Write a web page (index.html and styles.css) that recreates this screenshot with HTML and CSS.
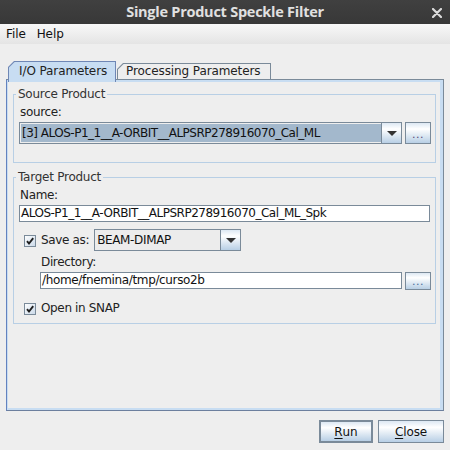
FILE: index.html
```html
<!DOCTYPE html>
<html>
<head>
<meta charset="utf-8">
<link rel="stylesheet" href="styles.css">
</head>
<body>
<div class="window">
  <div class="titlebar">
    <span class="title">Single Product Speckle Filter</span>
    <svg class="close-x" width="10" height="10" viewBox="0 0 10 10"><path d="M1 1 L9 9 M9 1 L1 9" stroke="#dcdcdc" stroke-width="2.2" stroke-linecap="round"/></svg>
  </div>
  <div class="menubar">
    <span class="menu">File</span>
    <span class="menu">Help</span>
  </div>
  <div class="content">
    <div class="tabs">
      <div class="tab tab-sel"><div class="tab-in">I/O Parameters</div></div>
      <div class="tab tab-un"><div class="tab-in">Processing Parameters</div></div>
    </div>
    <div class="panel">
      <fieldset class="group group-src">
        <legend>Source Product</legend>
        <div class="label">source:</div>
        <div class="row">
          <div class="combo combo-sel">
            <div class="combo-text">[3] ALOS-P1_1__A-ORBIT__ALPSRP278916070_Cal_ML</div>
            <div class="combo-btn"><svg width="10" height="5" viewBox="0 0 10 5"><path d="M0 0 H10 L5 5 Z" fill="#333"/></svg></div>
          </div>
          <div class="btn dots">...</div>
        </div>
      </fieldset>
      <fieldset class="group group-tgt">
        <legend>Target Product</legend>
        <div class="label">Name:</div>
        <div class="field field-name">ALOS-P1_1__A-ORBIT__ALPSRP278916070_Cal_ML_Spk</div>
        <div class="row row-save">
          <div class="check">
            <svg width="12" height="12" viewBox="0 0 12 12"><defs><linearGradient id="cg" x1="0" y1="0" x2="1" y2="1"><stop offset="0" stop-color="#ffffff"/><stop offset="1" stop-color="#c9d8e8"/></linearGradient></defs><rect x="0.5" y="0.5" width="11" height="11" fill="url(#cg)" stroke="#7a8a99"/><path d="M3 6.2 L5 8.6 L9.2 3.2" fill="none" stroke="#1e1e1e" stroke-width="1.9"/></svg>
            <span>Save as:</span>
          </div>
          <div class="combo combo-fmt">
            <div class="combo-text">BEAM-DIMAP</div>
            <div class="combo-btn"><svg width="10" height="5" viewBox="0 0 10 5"><path d="M0 0 H10 L5 5 Z" fill="#333"/></svg></div>
          </div>
        </div>
        <div class="indent">
          <div class="label label-dir">Directory:</div>
          <div class="row">
            <div class="field field-dir">/home/fnemina/tmp/curso2b</div>
            <div class="btn dots dots-dir">...</div>
          </div>
        </div>
        <div class="check check-open">
          <svg width="12" height="12" viewBox="0 0 12 12"><defs><linearGradient id="cg2" x1="0" y1="0" x2="1" y2="1"><stop offset="0" stop-color="#ffffff"/><stop offset="1" stop-color="#c9d8e8"/></linearGradient></defs><rect x="0.5" y="0.5" width="11" height="11" fill="url(#cg2)" stroke="#7a8a99"/><path d="M3 6.2 L5 8.6 L9.2 3.2" fill="none" stroke="#1e1e1e" stroke-width="1.9"/></svg>
          <span>Open in SNAP</span>
        </div>
      </fieldset>
    </div>
    <div class="actions">
      <div class="btn action run"><span class="u">R</span>un</div>
      <div class="btn action close"><span class="u">C</span>lose</div>
    </div>
  </div>
</div>
</body>
</html>
```

FILE: styles.css
```css
* { box-sizing: border-box; }
html, body { margin: 0; padding: 0; }
body {
  width: 450px;
  height: 450px;
  background: #eeeeee;
  font-family: "DejaVu Sans", sans-serif;
  font-size: 12px;
  letter-spacing: -0.35px;
  color: #222;
  overflow: hidden;
}
.window {
  width: 450px;
  height: 450px;
  display: flex;
  flex-direction: column;
}
.titlebar {
  height: 24px;
  background: linear-gradient(#404040, #383838);
  display: flex;
  align-items: center;
  justify-content: center;
  position: relative;
}
.title {
  font-family: "Open Sans", sans-serif;
  font-weight: 700;
  font-size: 14.5px;
  letter-spacing: -0.25px;
  color: #e0e0e0;
  line-height: 24px;
}
.close-x {
  position: absolute;
  right: 8px;
  top: 8px;
}
.menubar {
  height: 20px;
  background: linear-gradient(#f8f8f8, #e4e4e4);
  display: flex;
  align-items: center;
  padding-left: 1px;
  color: #111;
  letter-spacing: -0.1px;
}
.menu {
  padding: 0 5px;
  line-height: 20px;
}
.menu + .menu { padding-left: 6px; }
.content {
  flex: 1;
  display: flex;
  flex-direction: column;
  padding: 17px 6px 7px 6px;
}
.tabs {
  height: 18px;
  display: flex;
  align-items: flex-end;
  padding-left: 2px;
  position: relative;
  z-index: 2;
  letter-spacing: -0.1px;
}
.tab {
  padding: 1px 1px 0 1px;
  clip-path: polygon(6px 0, 100% 0, 100% 100%, 0 100%, 0 6px);
}
.tab-in {
  height: 100%;
  clip-path: polygon(5.6px 0, 100% 0, 100% 100%, 0 100%, 0 5.6px);
  line-height: 15px;
  color: #222;
}
.tab-sel {
  width: 108px;
  height: 21px;
  margin-bottom: -3px;
  background: #6f87b5;
}
.tab-sel .tab-in {
  background: #c8ddf2;
  padding: 2px 0 0 10px;
}
.tab-un {
  width: 154px;
  height: 16px;
  margin-left: 1px;
  background: #7a8a99;
}
.tab-un .tab-in {
  background: #eeeeee;
  padding: 0 0 0 8px;
  line-height: 14px;
}
.panel {
  flex: 1;
  border: 1px solid #7a8a99;
  border-left-color: #6382bf;
  border-bottom-color: #6c7f9e;
  box-shadow: inset 1px 0 0 #c8ddf2, inset -3px -2px 0 #c8ddf2, inset 0 2px 0 #c8ddf2;
  padding: 6px 7px 0 6px;
  display: flex;
  flex-direction: column;
}
.group {
  margin: 0;
  min-width: 0;
  border: 1px solid #b8cfe5;
  padding: 2px 4px 18px 5px;
}
.group legend {
  margin-left: -3px;
  padding: 0 2px;
  line-height: 16px;
  color: #333;
  letter-spacing: -0.25px;
}
.group-tgt {
  margin-top: 6px;
  padding-bottom: 7px;
}
.label {
  line-height: 16px;
  padding-left: 1px;
}
.row {
  display: flex;
  gap: 3px;
  margin-top: 2px;
}
.combo {
  height: 22px;
  border: 1px solid #7a8a99;
  display: flex;
}
.combo-sel { flex: 1; }
.combo-text {
  flex: 1;
  line-height: 20px;
  padding-left: 1px;
  white-space: nowrap;
  overflow: hidden;
  color: #111;
}
.combo-sel .combo-text {
  background: #a3b8cc;
  margin: 1px 0 1px 1px;
  line-height: 18px;
  letter-spacing: -0.5px;
}
.combo-btn {
  width: 20px;
  border-left: 1px solid #7a8a99;
  background: linear-gradient(#dde8f3 0%, #ffffff 30%, #b8cfe5 100%);
  display: flex;
  align-items: center;
  justify-content: center;
}
.combo-btn svg { margin-top: 1px; }
.btn {
  border: 1px solid #7a8a99;
  background: linear-gradient(#dde8f3 0%, #ffffff 30%, #b8cfe5 100%);
  display: flex;
  align-items: center;
  justify-content: center;
}
.dots {
  width: 26px;
  height: 22px;
  color: #5a4a7a;
  font-size: 11px;
  letter-spacing: 0.5px;
  line-height: 14px;
  padding-top: 3px;
}
.dots-dir {
  height: 18px;
  color: #4a6a9a;
  padding-top: 1px;
}
.field {
  height: 17px;
  background: #fff;
  border: 1px solid #7a8a99;
  line-height: 15px;
  padding-left: 1px;
  white-space: nowrap;
  overflow: hidden;
  color: #111;
}
.field-name {
  margin-top: 2px;
  margin-right: 1px;
  letter-spacing: -0.5px;
}
.field-dir { flex: 1; margin-top: 0; }
.row-save {
  margin-top: 7px;
  align-items: center;
  gap: 0;
}
.check {
  display: flex;
  align-items: center;
  gap: 5px;
  padding-left: 5px;
  line-height: 16px;
}
.row-save .check { margin-right: 5px; }
.check svg { margin-top: 1px; flex: none; }
.combo-fmt {
  width: 147px;
  background: #ececec;
}
.combo-fmt .combo-text { padding-left: 2px; }
.indent {
  margin-left: 21px;
  margin-top: 3px;
}
.check-open { margin-top: 10px; }
.actions {
  display: flex;
  justify-content: flex-end;
  gap: 5px;
  margin-top: 9px;
  letter-spacing: -0.1px;
}
.action {
  height: 23px;
  color: #111;
  line-height: 16px;
}
.run {
  width: 54px;
  border: 2px solid #7a8a99;
}
.close { width: 66px; }
.u { text-decoration: underline; text-underline-offset: 2px; }
```
